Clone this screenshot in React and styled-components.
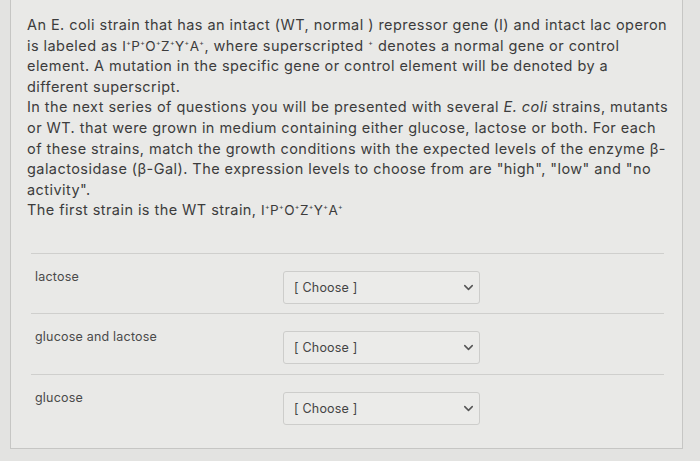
import React from 'react';
import styled, { createGlobalStyle } from 'styled-components';
import { ChevronDown } from 'lucide-react';

const GlobalStyle = createGlobalStyle`
  html, body {
    margin: 0;
    background: #e3e3e1;
    font-family: Inter, "Open Sans", sans-serif;
    color: #3f3f3f;
  }
`;

const Page = styled.div`
  height: 461px;
  overflow: hidden;
  padding-left: 10px;
`;

const Panel = styled.section`
  width: 673px;
  height: 449px;
  box-sizing: border-box;
  background: #e9e9e7;
  border: 1px solid #c6c6c4;
  border-top: none;
  padding: 15px 16px 0 16px;
`;

const Question = styled.div`
  font-size: 14.5px;
  letter-spacing: 0.44px;
  line-height: 20.6px;
  color: #3c3c3c;
`;

const Line = styled.span`
  display: block;
  white-space: nowrap;
`;

const Strain = styled.span`
  font-size: 13.5px;
  letter-spacing: 0;
`;

const Sup = styled.sup`
  font-size: 7px;
  line-height: 0;
  vertical-align: 6px;
  letter-spacing: 0;
  margin: 0 0.5px 0 0.3px;
`;

const Answers = styled.div`
  margin: 32px 2px 0 4px;
`;

const AnswerRow = styled.div`
  display: grid;
  grid-template-columns: 248px 197px;
  height: 60.5px;
  box-sizing: border-box;
  border-top: 1px solid #cfcfcd;
  padding: 15px 0 0 4px;
`;

const Label = styled.div`
  font-size: 12.5px;
  letter-spacing: 0.2px;
  color: #4a4a4a;
`;

const Select = styled.div`
  margin-top: 2px;
  height: 33px;
  box-sizing: border-box;
  border: 1px solid #cdcdcb;
  border-radius: 3px;
  background: #ebebe9;
  display: flex;
  align-items: center;
  justify-content: space-between;
  padding: 0 3px 0 10px;
  font-size: 12.5px;
  letter-spacing: 0.2px;
  color: #444;
`;

const Plus = () => <Sup>+</Sup>;

const Genotype = () => (
  <Strain>
    I<Plus />P<Plus />O<Plus />Z<Plus />Y<Plus />A<Plus />
  </Strain>
);

const conditions = ['lactose', 'glucose and lactose', 'glucose'];

export default function App() {
  return (
    <Page>
      <GlobalStyle />
      <Panel>
        <Question>
          <Line>An E. coli strain that has an intact (WT, normal ) repressor gene (I) and intact lac operon</Line>
          <Line>
            is labeled as <Genotype />, where superscripted <Plus /> denotes a normal gene or control
          </Line>
          <Line>element. A mutation in the specific gene or control element will be denoted by a</Line>
          <Line>different superscript.</Line>
          <Line>
            In the next series of questions you will be presented with several <i>E. coli</i> strains, mutants
          </Line>
          <Line>or WT. that were grown in medium containing either glucose, lactose or both. For each</Line>
          <Line>of these strains, match the growth conditions with the expected levels of the enzyme β-</Line>
          <Line>galactosidase (β-Gal). The expression levels to choose from are "high", "low" and "no</Line>
          <Line>activity".</Line>
          <Line>
            The first strain is the WT strain, <Genotype />
          </Line>
        </Question>
        <Answers>
          {conditions.map((c) => (
            <AnswerRow key={c}>
              <Label>{c}</Label>
              <Select>
                <span>[ Choose ]</span>
                <ChevronDown size={15} strokeWidth={2.4} color="#555" />
              </Select>
            </AnswerRow>
          ))}
        </Answers>
      </Panel>
    </Page>
  );
}
